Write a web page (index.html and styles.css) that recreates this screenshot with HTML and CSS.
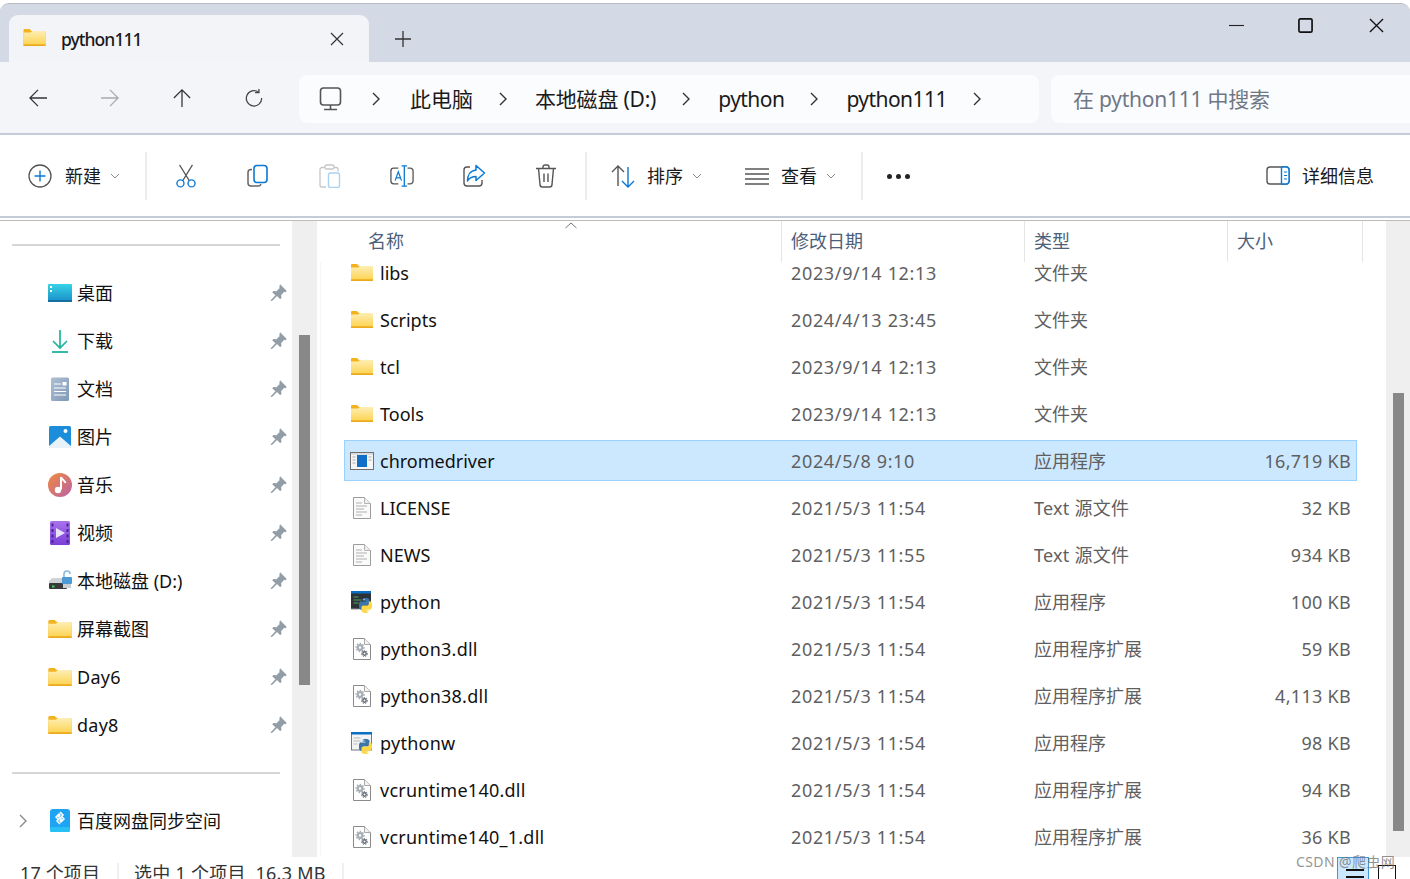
FILE: index.html
```html
<!DOCTYPE html>
<html lang="zh-CN">
<head>
<meta charset="utf-8">
<title>python111</title>
<link rel="stylesheet" href="styles.css">
</head>
<body>
<svg class="sprite" aria-hidden="true">
  <defs>
    <linearGradient id="fg" x1="0" y1="0" x2="0" y2="1"><stop offset="0" stop-color="#fdeeb4"/><stop offset="1" stop-color="#fdd455"/></linearGradient>
    <linearGradient id="desk" x1="0" y1="0" x2="0" y2="1"><stop offset="0" stop-color="#36d3e6"/><stop offset="1" stop-color="#1a8dc8"/></linearGradient>
    <linearGradient id="doc" x1="0" y1="0" x2="1" y2="1"><stop offset="0" stop-color="#aebfd4"/><stop offset="1" stop-color="#7f99b6"/></linearGradient>
    <linearGradient id="mus" x1="0" y1="0" x2="1" y2="1"><stop offset="0" stop-color="#f08a3c"/><stop offset="1" stop-color="#bb62a8"/></linearGradient>
    <linearGradient id="vid" x1="0" y1="0" x2="0" y2="1"><stop offset="0" stop-color="#a873ea"/><stop offset="1" stop-color="#7b3fd8"/></linearGradient>
    <symbol id="folder" viewBox="0 0 22 17">
      <path d="M0 1q0-1 1-1h5l2 2h13q1 0 1 1v13q0 1-1 1H1q-1 0-1-1z" fill="#f4b21c"/>
      <path d="M0 3.500h7l2-1.500h13v13.500H0z" fill="url(#fg)"/>
      <rect y="15.500" width="22" height="1.500" fill="#eba91f"/>
    </symbol>
    <symbol id="pin" viewBox="0 0 16 16">
      <path d="M9.500 0.200l6.300 6.300-1.300 1.200-1-.4-3 3 .2 2.900-1.100 1.100-3-3-4.700 4.700-1.600-.2 4.800-5.100-3-3 1.100-1.100 2.900.2 3-3-.4-1z" fill="#939da7"/>
    </symbol>
    <symbol id="txt" viewBox="0 0 18 22">
      <path d="M.5.500h11l6 6v15H.5z" fill="#fafafa" stroke="#9c9c9c"/>
      <path d="M11.500.500v6h6" fill="#eee" stroke="#b5b5b5"/>
      <path d="M3 6h6M3 9h11M3 12h8M3 15h11M3 18h6" stroke="#c9c9c9" stroke-width="1.300"/>
    </symbol>
    <symbol id="dll" viewBox="0 0 18 22">
      <path d="M.5.500h11l6 6v15H.5z" fill="#fff" stroke="#8b8b8b"/>
      <path d="M11.500.500v6h6" fill="#f2f2f2" stroke="#aaa"/>
      <circle cx="7" cy="9.500" r="2.300" fill="none" stroke="#a7adb5" stroke-width="2.200"/>
      <circle cx="7" cy="9.500" r="4" fill="none" stroke="#a7adb5" stroke-width="1.300" stroke-dasharray="1.500 1.500"/>
      <circle cx="11.500" cy="15.500" r="1.700" fill="none" stroke="#5f666e" stroke-width="1.400"/>
      <circle cx="11.500" cy="15.500" r="3" fill="none" stroke="#5f666e" stroke-width="1" stroke-dasharray="1.300 1.300"/>
    </symbol>
    <symbol id="py" viewBox="0 0 16 16">
      <path d="M7.900 0C4.800 0 5 1.300 5 1.300V3h3v.6H3.200S1 3.300 1 7.900s2 4.500 2 4.500h1.400v-2.200s-.1-2.200 2.200-2.200h3.600s2.100 0 2.100-2.100V2.300S12.600 0 7.900 0z" fill="#3a76a8"/>
      <path d="M8.100 16c3.100 0 2.900-1.300 2.900-1.300V13H8v-.6h4.800S15 12.700 15 8.100s-2-4.500-2-4.500h-1.400v2.200s.1 2.200-2.200 2.200H5.800s-2.100 0-2.100 2.100v3.600S3.400 16 8.100 16z" fill="#ffd644"/>
      <circle cx="6.300" cy="1.700" r=".6" fill="#fff"/><circle cx="9.700" cy="14.300" r=".6" fill="#fff"/>
    </symbol>
    <symbol id="chev" viewBox="0 0 10 16">
      <path d="M2 2l6 6-6 6" fill="none" stroke="currentColor" stroke-width="1.400"/>
    </symbol>
    <symbol id="down" viewBox="0 0 10 6">
      <path d="M1 1l4 4 4-4" fill="none" stroke="#8a8a8a" stroke-width="1"/>
    </symbol>
  </defs>
</svg>

<div class="app">
  <header class="titlebar">
    <div class="tab">
      <svg class="tab-folder"><use href="#folder"/></svg>
      <span class="tab-title">python111</span>
      <svg class="tab-close" viewBox="0 0 14 14"><path d="M1 1l12 12M13 1L1 13" stroke="#333" stroke-width="1.200"/></svg>
    </div>
    <svg class="tab-add" viewBox="0 0 16 16"><path d="M8 0v16M0 8h16" stroke="#333" stroke-width="1.300"/></svg>
    <div class="win-controls">
      <svg class="win-btn" viewBox="0 0 16 16"><path d="M0 8h16" stroke="#222" stroke-width="1.200"/></svg>
      <svg class="win-btn" viewBox="0 0 16 16"><rect x="1" y="1" width="14" height="14" rx="1.500" fill="none" stroke="#111" stroke-width="1.800"/></svg>
      <svg class="win-btn win-close" viewBox="0 0 16 16"><path d="M1 1l14 14M15 1L1 15" stroke="#111" stroke-width="1.400"/></svg>
    </div>
  </header>

  <nav class="navbar">
    <div class="nav-btns">
      <svg class="nav-ico" viewBox="0 0 20 20"><path d="M20 10H1M10 1l-9 9 9 9" fill="none" stroke="#333" stroke-width="1.400"/></svg>
      <svg class="nav-ico" viewBox="0 0 20 20"><path d="M0 10h19M10 1l9 9-9 9" fill="none" stroke="#a9a9a9" stroke-width="1.400"/></svg>
      <svg class="nav-ico" viewBox="0 0 20 20"><path d="M10 20V1M1 10l9-9 9 9" fill="none" stroke="#333" stroke-width="1.400"/></svg>
      <svg class="nav-ico" viewBox="0 0 20 20"><path d="M15 3.500A8.500 8.500 0 1 0 18.500 10M15.500 0v4h-4.300" fill="none" stroke="#444" stroke-width="1.400"/></svg>
    </div>
    <div class="address">
      <svg class="pc-ico" viewBox="0 0 24 24"><rect x="1.500" y="1" width="20" height="17" rx="3" fill="none" stroke="#555" stroke-width="1.600"/><path d="M11.500 18v4M5 22.500h13" stroke="#555" stroke-width="1.600"/></svg>
      <svg class="crumb-sep first"><use href="#chev"/></svg>
      <span class="crumb crumb-cjk">此电脑</span>
      <svg class="crumb-sep"><use href="#chev"/></svg>
      <span class="crumb crumb-cjk crumb-mixed">本地磁盘 (D:)</span>
      <svg class="crumb-sep"><use href="#chev"/></svg>
      <span class="crumb crumb-latin">python</span>
      <svg class="crumb-sep"><use href="#chev"/></svg>
      <span class="crumb crumb-latin">python111</span>
      <svg class="crumb-sep"><use href="#chev"/></svg>
    </div>
    <div class="search">在 python111 中搜索</div>
  </nav>

  <div class="toolbar">
    <div class="tb-new">
      <svg class="tb-ico" viewBox="0 0 24 24"><circle cx="12" cy="12" r="11" fill="none" stroke="#555" stroke-width="1.300"/><path d="M12 6.500v11M6.500 12h11" stroke="#0a78d4" stroke-width="1.400"/></svg>
      <span class="tb-label">新建</span>
      <svg class="tb-down"><use href="#down"/></svg>
    </div>
    <i class="tb-sep"></i>
    <div class="tb-actions">
      <span class="tb-cell"><svg class="tb-ico" viewBox="0 0 24 26"><path d="M5 1l10.500 17M19 1L8.500 18" fill="none" stroke="#555" stroke-width="1.300"/><circle cx="6" cy="21" r="3.800" fill="none" stroke="#0a78d4" stroke-width="1.500"/><circle cx="18" cy="21" r="3.800" fill="none" stroke="#0a78d4" stroke-width="1.500"/></svg></span>
      <span class="tb-cell"><svg class="tb-ico" viewBox="0 0 24 24"><path d="M6 5.500H5a3 3 0 0 0-3 3V19a3 3 0 0 0 3 3h7a3 3 0 0 0 3-2" fill="none" stroke="#666" stroke-width="1.500"/><rect x="8" y="1.500" width="13" height="17" rx="3" fill="none" stroke="#0a78d4" stroke-width="1.600"/></svg></span>
      <span class="tb-cell"><svg class="tb-ico" viewBox="0 0 24 24"><path d="M7 3.500H4a2 2 0 0 0-2 2V21a2 2 0 0 0 2 2h4M16 3.500h2a2 2 0 0 1 2 2v2" fill="none" stroke="#c6c6c6" stroke-width="1.300"/><rect x="7" y="1" width="9" height="4" rx="1.500" fill="none" stroke="#c6c6c6" stroke-width="1.300"/><rect x="10.500" y="9" width="11" height="14.500" rx="2" fill="none" stroke="#a9d2f3" stroke-width="1.400"/></svg></span>
      <span class="tb-cell"><svg class="tb-ico" viewBox="0 0 26 24"><path d="M9 3.500H4a3 3 0 0 0-3 3v11a3 3 0 0 0 3 3h5M19 3.500h3a3 3 0 0 1 3 3v11a3 3 0 0 1-3 3h-3" fill="none" stroke="#555" stroke-width="1.400"/><path d="M5.500 17l3.500-9.500 3.500 9.500M6.700 14h4.600" fill="none" stroke="#0a78d4" stroke-width="1.300"/><path d="M15.500 1v22M12.500 1h6M12.500 23h6" fill="none" stroke="#0a78d4" stroke-width="1.400"/></svg></span>
      <span class="tb-cell"><svg class="tb-ico" viewBox="0 0 24 24"><path d="M8 3H5a3 3 0 0 0-3 3v13a3 3 0 0 0 3 3h12a3 3 0 0 0 3-3v-3" fill="none" stroke="#555" stroke-width="1.400"/><path d="M14 1.500l8.500 7.500-8.500 7.500v-4c-4 0-6.500 1-8.500 4.500 0-6 3-10.500 8.500-11z" fill="none" stroke="#0a78d4" stroke-width="1.500" stroke-linejoin="round"/></svg></span>
      <span class="tb-cell"><svg class="tb-ico" viewBox="0 0 24 24"><path d="M2 4.500h20M4.500 4.500l1.500 16a2.500 2.500 0 0 0 2.500 2.500h7a2.500 2.500 0 0 0 2.500-2.500l1.500-16M9 4V3a2 2 0 0 1 2-2h2a2 2 0 0 1 2 2v1M10 9.500v8.500M14 9.500v8.500" fill="none" stroke="#555" stroke-width="1.400"/></svg></span>
    </div>
    <i class="tb-sep"></i>
    <div class="tb-sort">
      <svg class="tb-ico" viewBox="0 0 24 24"><path d="M7 22V2M1 8l6-6 6 6" fill="none" stroke="#555" stroke-width="1.400"/><path d="M17 3v20M11 17l6 6 6-6" fill="none" stroke="#0a78d4" stroke-width="1.400"/></svg>
      <span class="tb-label">排序</span>
      <svg class="tb-down"><use href="#down"/></svg>
    </div>
    <div class="tb-view">
      <svg class="tb-ico" viewBox="0 0 24 24"><path d="M0 5h24M0 10h24M0 15h24M0 20h24" stroke="#555" stroke-width="1.300"/></svg>
      <span class="tb-label">查看</span>
      <svg class="tb-down"><use href="#down"/></svg>
    </div>
    <i class="tb-sep"></i>
    <div class="tb-more"><i></i><i></i><i></i></div>
    <div class="tb-details">
      <svg class="tb-ico" viewBox="0 0 24 20"><rect x="1" y="1" width="22" height="17" rx="3" fill="none" stroke="#555" stroke-width="1.400"/><path d="M15.500 1H20a3 3 0 0 1 3 3v11a3 3 0 0 1-3 3h-4.500z" fill="#fff" stroke="#0a78d4" stroke-width="1.400"/><path d="M18 6h3M18 9.500h3M18 13h3" stroke="#0a78d4" stroke-width="1.200"/></svg>
      <span class="tb-label">详细信息</span>
    </div>
  </div>

  <div class="split"></div>

  <main class="main">
    <aside class="sidebar">
      <hr class="side-rule">
      <ul class="side-list">
        <li class="side-row"><svg class="side-ico" viewBox="0 0 24 24"><rect y="3" width="24" height="18" rx="1" fill="url(#desk)"/><rect x="2" y="5" width="2" height="2" fill="#fff"/><rect x="2" y="9" width="2" height="2" fill="#fff"/><rect y="19" width="24" height="2" fill="#14709f"/></svg><span class="cjk">桌面</span><svg class="pin"><use href="#pin"/></svg></li>
        <li class="side-row"><svg class="side-ico" viewBox="0 0 24 24"><path d="M12 1v18M5 12l7 7 7-7" fill="none" stroke="#1fb49b" stroke-width="1.700"/><path d="M4 23h16" stroke="#1fb49b" stroke-width="1.800"/></svg><span class="cjk">下载</span><svg class="pin"><use href="#pin"/></svg></li>
        <li class="side-row"><svg class="side-ico" viewBox="0 0 24 24"><rect x="3" y="0.500" width="18" height="23.500" rx="1.500" fill="url(#doc)"/><path d="M6 7h7M6 11h12M6 14.500h12M6 18h12" stroke="#fff" stroke-width="1.100"/><rect x="14.500" y="5" width="4" height="3.500" fill="#fff"/></svg><span class="cjk">文档</span><svg class="pin"><use href="#pin"/></svg></li>
        <li class="side-row"><svg class="side-ico" viewBox="0 0 24 24"><rect x="1" y="1" width="22" height="22" rx="1.500" fill="#1b8ddb"/><circle cx="17.500" cy="6" r="2" fill="#fff"/><path d="M1 21l11-9.500L23 21v2H1z" fill="#e8f2fb"/></svg><span class="cjk">图片</span><svg class="pin"><use href="#pin"/></svg></li>
        <li class="side-row"><svg class="side-ico" viewBox="0 0 24 24"><circle cx="12" cy="12" r="12" fill="url(#mus)"/><path d="M13 4v12.500" stroke="#fff" stroke-width="2"/><path d="M13 4c1 3 4 3.500 4.500 6" fill="none" stroke="#fff" stroke-width="2"/><circle cx="10" cy="17" r="3.200" fill="#fff"/></svg><span class="cjk">音乐</span><svg class="pin"><use href="#pin"/></svg></li>
        <li class="side-row"><svg class="side-ico" viewBox="0 0 24 24"><rect x="2" y="0" width="20" height="24" rx="1.500" fill="url(#vid)"/><path d="M3.500 2.500h2v3h-2zM3.500 8h2v3h-2zM3.500 13.500h2v3h-2zM3.500 19h2v3h-2zM18.500 2.500h2v3h-2zM18.500 8h2v3h-2zM18.500 13.500h2v3h-2zM18.500 19h2v3h-2z" fill="#4a2398"/><path d="M8 7l9 5-9 5z" fill="#e8e4fb"/></svg><span class="cjk">视频</span><svg class="pin"><use href="#pin"/></svg></li>
        <li class="side-row"><svg class="side-ico" viewBox="0 0 24 24"><path d="M1 12l3-3h13v10H1z" fill="#d0d3d6"/><rect x="1" y="14" width="18" height="6" rx="1" fill="#37393c"/><rect x="4" y="16.500" width="2.500" height="2" fill="#39d353"/><path d="M16 9V5a3 3 0 0 1 6 0" fill="none" stroke="#8bb8dc" stroke-width="1.600"/><rect x="14" y="8" width="10" height="7" rx="1" fill="#4b9ad6"/><rect x="15" y="15" width="8" height="4" fill="#c9ced3"/></svg><span class="cjk">本地磁盘 (D:)</span><svg class="pin"><use href="#pin"/></svg></li>
        <li class="side-row"><svg class="side-ico folder-ico"><use href="#folder"/></svg><span class="cjk">屏幕截图</span><svg class="pin"><use href="#pin"/></svg></li>
        <li class="side-row"><svg class="side-ico folder-ico"><use href="#folder"/></svg><span class="num">Day6</span><svg class="pin"><use href="#pin"/></svg></li>
        <li class="side-row"><svg class="side-ico folder-ico"><use href="#folder"/></svg><span class="num">day8</span><svg class="pin"><use href="#pin"/></svg></li>
      </ul>
      <hr class="side-rule">
      <div class="side-row">
        <svg class="side-chev"><use href="#chev"/></svg>
        <svg class="side-ico" viewBox="0 0 24 24"><rect x="2" y="0" width="20" height="23" rx="3" fill="#1fa4f4"/><rect x="2" y="18" width="20" height="5" rx="1.500" fill="#27c1f5"/><path d="M12 3l3 3-3 3-1.500-1.500L12 6l-1-1-3 3 3 3M12 15l-3-3 3-3 1.500 1.500L12 12l1 1 3-3-3-3" fill="none" stroke="#fff" stroke-width="1.500"/></svg>
        <span class="cjk">百度网盘同步空间</span>
      </div>
    </aside>
    <div class="track side-track"><div class="thumb side-thumb"></div></div>

    <section class="list">
      <div class="list-head">
        <span class="hd hd-name">名称</span>
        <span class="hd hd-date">修改日期</span>
        <span class="hd hd-type">类型</span>
        <span class="hd hd-size">大小</span>
        <svg class="sort-arrow" viewBox="0 0 12 7"><path d="M.5 6L6 1l5.500 5" fill="none" stroke="#777"/></svg>
      </div>

      <div class="row"><svg class="file-ico"><use href="#folder"/></svg><span class="name">libs</span><span class="date">2023/9/14 12:13</span><span class="type">文件夹</span><span class="size"></span></div>
      <div class="row"><svg class="file-ico"><use href="#folder"/></svg><span class="name">Scripts</span><span class="date">2024/4/13 23:45</span><span class="type">文件夹</span><span class="size"></span></div>
      <div class="row"><svg class="file-ico"><use href="#folder"/></svg><span class="name">tcl</span><span class="date">2023/9/14 12:13</span><span class="type">文件夹</span><span class="size"></span></div>
      <div class="row"><svg class="file-ico"><use href="#folder"/></svg><span class="name">Tools</span><span class="date">2023/9/14 12:13</span><span class="type">文件夹</span><span class="size"></span></div>
      <div class="row selected"><svg class="exe-ico" viewBox="0 0 24 18"><rect x=".5" y=".5" width="23" height="17" fill="#f6f6f6" stroke="#6f6f6f"/><rect x="1" y="1" width="22" height="2" fill="#dcdcdc"/><rect x="7" y="3" width="10" height="12" fill="#0f6fc6"/><path d="M2.500 5h3M2.500 8h3M2.500 11h3M18.500 5h3M18.500 8h3" stroke="#aaa"/></svg><span class="name">chromedriver</span><span class="date">2024/5/8 9:10</span><span class="type">应用程序</span><span class="size">16,719 KB</span></div>
      <div class="row"><svg class="doc-ico"><use href="#txt"/></svg><span class="name">LICENSE</span><span class="date">2021/5/3 11:54</span><span class="type type-latin">Text 源文件</span><span class="size">32 KB</span></div>
      <div class="row"><svg class="doc-ico"><use href="#txt"/></svg><span class="name">NEWS</span><span class="date">2021/5/3 11:55</span><span class="type type-latin">Text 源文件</span><span class="size">934 KB</span></div>
      <div class="row"><svg class="app-ico" viewBox="0 0 22 22"><rect y="0" width="20" height="18" fill="#2c3236"/><rect y="0" width="20" height="2.500" fill="#0b6fc2"/><path d="M2.500 6h5M2.500 9h8M2.500 12h5" stroke="#4fa35a"/><path d="M0 18h8" stroke="#8b8f92"/><svg x="7" y="7" width="15" height="15"><use href="#py"/></svg></svg><span class="name num">python</span><span class="date">2021/5/3 11:54</span><span class="type">应用程序</span><span class="size">100 KB</span></div>
      <div class="row"><svg class="doc-ico"><use href="#dll"/></svg><span class="name num">python3.dll</span><span class="date">2021/5/3 11:54</span><span class="type">应用程序扩展</span><span class="size">59 KB</span></div>
      <div class="row"><svg class="doc-ico"><use href="#dll"/></svg><span class="name num">python38.dll</span><span class="date">2021/5/3 11:54</span><span class="type">应用程序扩展</span><span class="size">4,113 KB</span></div>
      <div class="row"><svg class="app-ico" viewBox="0 0 22 22"><rect x=".5" y=".5" width="20" height="17.500" fill="#f4f4f4" stroke="#77797c"/><rect y="0" width="21" height="2.500" fill="#0b6fc2"/><path d="M2.500 6h7M2.500 9h7M2.500 12h4" stroke="#b9b9b9"/><svg x="7" y="7" width="15" height="15"><use href="#py"/></svg></svg><span class="name num">pythonw</span><span class="date">2021/5/3 11:54</span><span class="type">应用程序</span><span class="size">98 KB</span></div>
      <div class="row"><svg class="doc-ico"><use href="#dll"/></svg><span class="name num">vcruntime140.dll</span><span class="date">2021/5/3 11:54</span><span class="type">应用程序扩展</span><span class="size">94 KB</span></div>
      <div class="row"><svg class="doc-ico"><use href="#dll"/></svg><span class="name num">vcruntime140_1.dll</span><span class="date">2021/5/3 11:54</span><span class="type">应用程序扩展</span><span class="size">36 KB</span></div>
    </section>
    <div class="track list-track"><div class="thumb list-thumb"></div></div>
  </main>

  <footer class="status">
    <span class="st-count">17 个项目</span>
    <i class="st-sep"></i>
    <span class="st-sel">选中 1 个项目&nbsp; 16.3 MB</span>
    <i class="st-sep"></i>
    <div class="views">
      <div class="view-list"><i></i></div>
      <div class="view-grid"></div>
    </div>
  </footer>
  <div class="watermark">CSDN @爬虫网</div>
</div>
</body>
</html>
```
FILE: styles.css
```css
* { box-sizing: border-box; }
html, body { margin: 0; padding: 0; height: 100%; overflow: hidden; }
body { background: #fff; font-family: "Noto Sans", "Noto Sans CJK SC", sans-serif; color: #1a1a1a; }
.sprite { position: absolute; width: 0; height: 0; }
.app { position: relative; width: 1410px; height: 879px; overflow: hidden; display: flex; flex-direction: column; background: #fff; padding-top: 3px; }

.titlebar { height: 59px; flex: none; background: #d3dae6; border-top: 1px solid #b9bcc2; border-radius: 9px 9px 0 0; display: flex; align-items: flex-end; padding-left: 9px; }
.tab { width: 360px; height: 47px; background: #f3f4f8; border-radius: 9px 9px 0 0; display: flex; align-items: center; padding: 0 25px 0 14px; }
.tab-folder { width: 23px; height: 17px; flex: none; margin-bottom: 3px; }
.tab-title { margin-left: 15px; font-size: 17.500px; font-weight: 500; letter-spacing: -.95px; color: #1a1a1a; }
.tab-close { width: 14px; height: 14px; margin-left: auto; }
.tab-add { width: 16px; height: 16px; margin: 0 0 15px 26px; }
.win-controls { margin-left: auto; align-self: flex-start; display: flex; gap: 54px; padding: 14px 26px 0 0; }
.win-btn { width: 15px; height: 15px; }
.win-close { margin-left: 2px; }

.navbar { height: 73px; flex: none; background: #f3f5f9; border-bottom: 2px solid #c5ccd9; display: flex; align-items: flex-start; padding-top: 13px; }
.nav-btns { width: 299px; flex: none; display: flex; gap: 54px; padding: 14px 0 0 29px; }
.nav-ico { width: 18px; height: 18px; flex: none; }
.address { width: 740px; height: 48px; flex: none; background: #fbfcfe; border-radius: 8px; display: flex; align-items: center; padding-left: 20px; }
.pc-ico { width: 24px; height: 24px; flex: none; }
.crumb { font-size: 21px; color: #1a1a1a; white-space: nowrap; }
.crumb-cjk { margin-bottom: 2px; }
.crumb-mixed { letter-spacing: -.2px; }
.crumb-latin { letter-spacing: -.55px; }
.crumb-sep { width: 10px; height: 16px; flex: none; margin: 0 27px 0 25px; color: #333; }
.crumb-sep.first { margin: 0 29px 0 28px; }
.search { margin-left: 12px; flex: 1; height: 48px; background: #fbfcfe; border-radius: 8px 0 0 8px; padding-left: 22px; font-size: 21px; line-height: 48px; letter-spacing: -.25px; color: #6f7785; white-space: nowrap; }

.toolbar { height: 83px; flex: none; background: #fff; border-bottom: 2px solid #c5ccd9; display: flex; align-items: center; }
.tb-ico { width: 24px; height: 24px; flex: none; }
.tb-label { font-size: 18px; white-space: nowrap; color: #1a1a1a; margin-bottom: 2px; }
.tb-down { width: 10px; height: 6px; flex: none; margin-left: 9px; }
.tb-sep { width: 2px; height: 48px; background: #ececec; flex: none; }
.tb-new { width: 145px; display: flex; align-items: center; padding-left: 28px; gap: 13px; }
.tb-new .tb-down { margin-left: -4px; }
.tb-actions { width: 438px; display: flex; padding-left: 3px; }
.tb-cell { width: 72px; display: flex; justify-content: center; }
.tb-sort { width: 134px; display: flex; align-items: center; padding-left: 24px; gap: 12px; }
.tb-sort .tb-down { margin-left: -3px; }
.tb-view { width: 140px; display: flex; align-items: center; padding-left: 24px; gap: 12px; }
.tb-view .tb-down { margin-left: -3px; }
.tb-more { display: flex; gap: 4px; margin: 2px 0 0 24px; }
.tb-more i { width: 5px; height: 5px; border-radius: 50%; background: #222; }
.tb-details { margin-left: auto; padding-right: 36px; display: flex; align-items: center; gap: 12px; }

.split { height: 3px; flex: none; background: #fff; border-bottom: 1px solid #bcbcbc; }

.main { height: 636px; flex: none; display: flex; }
.sidebar { width: 292px; flex: none; }
.side-rule { margin: 23px 12px 23px; width: 268px; height: 2px; border: 0; background: #d6d6d6; }
.side-list { list-style: none; margin: 0; padding: 0; }
.side-row { height: 48px; position: relative; display: flex; align-items: center; padding: 0 5px 0 48px; gap: 5px; font-size: 18px; color: #111; white-space: nowrap; }
.side-row .cjk { margin-bottom: 2px; }
.side-ico { width: 24px; height: 24px; flex: none; }
.folder-ico { height: 18px; }
.pin { width: 17px; height: 17px; margin: 0 0 2px auto; flex: none; }
.side-chev { position: absolute; left: 18px; top: 16px; width: 10px; height: 16px; color: #8a8a8a; }

.track { position: relative; background: #efefef; flex: none; }
.side-track { width: 25px; }
.side-thumb { margin: 114px 0 0 7px; height: 350px; }
.thumb { width: 11px; background: #888; }
.list-track { width: 24px; }
.list-thumb { margin: 172px 0 0 7px; height: 438px; width: 11px; }

.list { position: relative; width: 1069px; flex: none; padding-top: 31px; border-left: 3px solid #fff; }
.list::before { content: ""; position: absolute; left: 0; top: 0; bottom: 0; width: 1px; background: #f5f5f5; }
.list-head { position: absolute; left: 0; right: 0; top: 0; height: 41px; background: #fff; z-index: 1; }
.hd { position: absolute; top: 0; height: 41px; line-height: 41px; font-size: 18px; color: #4c607a; }
.hd-name { left: 48px; }
.hd-date, .hd-type, .hd-size { border-left: 1px solid #e5e5e5; padding-left: 9px; }
.hd-date { left: 461px; width: 243px; }
.hd-type { left: 704px; width: 203px; }
.hd-size { left: 907px; width: 136px; border-right: 1px solid #e5e5e5; }
.sort-arrow { position: absolute; left: 245px; top: 1px; width: 12px; height: 7px; }

.row { position: relative; width: 1013px; height: 41px; margin: 0 0 6px 24px; display: grid; grid-template-columns: 35px 411px 243px 193px 124px; align-items: center; border: 1px solid transparent; font-size: 18px; white-space: nowrap; }
.row.selected { background: #cce8ff; border-color: #99d1ff; }
.file-ico { width: 22px; height: 17px; margin-left: 6px; }
.doc-ico { width: 18px; height: 22px; margin-left: 8px; }
.app-ico { width: 22px; height: 22px; margin-left: 6px; }
.exe-ico { width: 24px; height: 18px; margin-left: 5px; }
.name { color: #111; }
.num { letter-spacing: .25px; }
.date { color: #5f5f5f; letter-spacing: .65px; }
.type { color: #5f5f5f; margin-bottom: 2px; }
.type-latin { letter-spacing: .25px; }
.size { color: #5f5f5f; text-align: right; letter-spacing: .3px; }

.status { height: 22px; flex: none; display: flex; align-items: flex-start; padding: 5px 14px 0 20px; font-size: 18px; color: #333; line-height: 22px; overflow: hidden; }
.st-count { width: 97px; white-space: nowrap; letter-spacing: .15px; }
.st-sep { width: 2px; height: 16px; margin-top: 1px; background: #efefef; flex: none; }
.st-sel { margin-left: 15px; width: 208px; white-space: nowrap; letter-spacing: .25px; }
.views { margin-left: auto; margin-top: -5px; display: flex; gap: 9px; }
.view-list { width: 32px; height: 22px; background: #cce8ff; border: 1px solid #3d9ad6; border-bottom: 0; padding: 11px 4px 0 8px; }
.view-list i { display: block; height: 9px; border-top: 2px solid #111; border-bottom: 2px solid #111; }
.view-grid { width: 18px; height: 14px; margin-top: 8px; border: 1px solid #111; border-bottom: 0; }
.watermark { position: absolute; left: 1296px; top: 853px; font-size: 14px; line-height: 18px; letter-spacing: .4px; color: rgba(110,110,110,.75); white-space: nowrap; }
```
